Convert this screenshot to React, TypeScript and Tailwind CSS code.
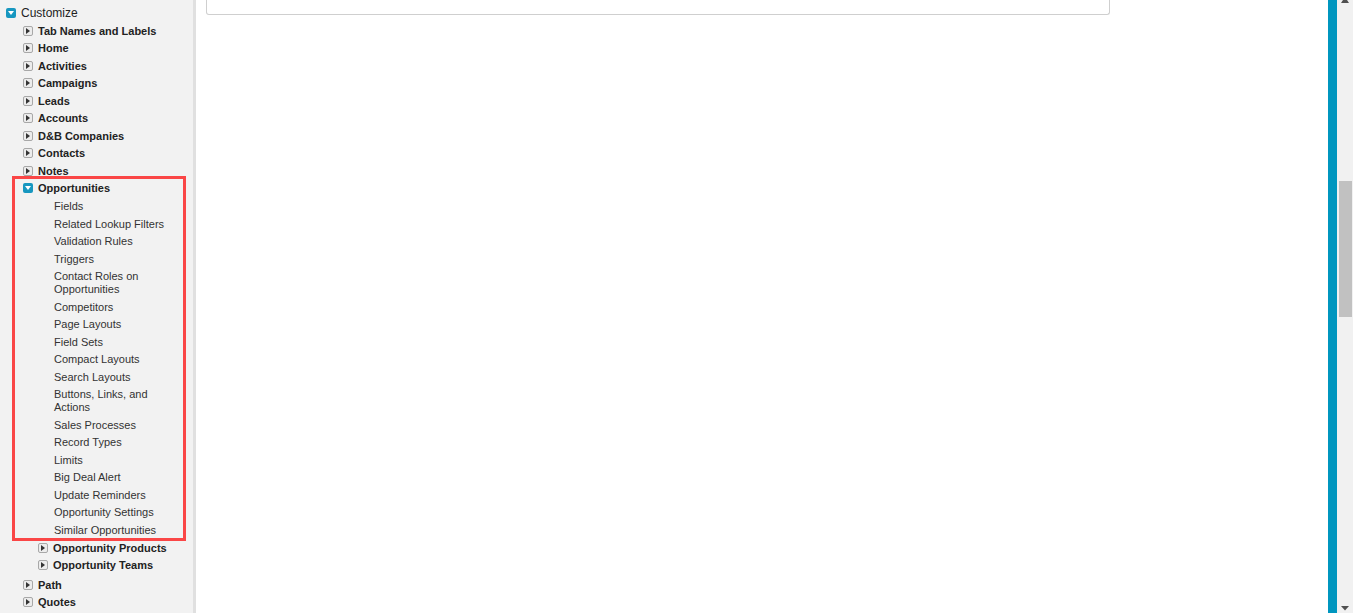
const topItems = [
  "Tab Names and Labels",
  "Home",
  "Activities",
  "Campaigns",
  "Leads",
  "Accounts",
  "D&B Companies",
  "Contacts",
  "Notes",
]

const oppLinks = [
  "Fields",
  "Related Lookup Filters",
  "Validation Rules",
  "Triggers",
  "Contact Roles on Opportunities",
  "Competitors",
  "Page Layouts",
  "Field Sets",
  "Compact Layouts",
  "Search Layouts",
  "Buttons, Links, and Actions",
  "Sales Processes",
  "Record Types",
  "Limits",
  "Big Deal Alert",
  "Update Reminders",
  "Opportunity Settings",
  "Similar Opportunities",
]

const Collapsed = () => (
  <span className="mr-[5px] flex h-[10px] w-[10px] shrink-0 items-center justify-center rounded-[2px] border border-[#a8a8a8] bg-[#ececec]">
    <svg width="4" height="6" viewBox="0 0 4 6">
      <path d="M0 0 L4 3 L0 6 Z" fill="#333" />
    </svg>
  </span>
)

const Expanded = () => (
  <span className="mr-[5px] flex h-[10px] w-[10px] shrink-0 items-center justify-center rounded-[2px] bg-[#1797c0]">
    <svg width="6" height="4" viewBox="0 0 6 4">
      <path d="M0 0 L6 0 L3 4 Z" fill="#fff" />
    </svg>
  </span>
)

const Row = ({ label, indent, open }: { label: string; indent: string; open?: boolean }) => (
  <li className={`flex h-[17.5px] items-center ${indent} font-bold text-[11px] text-[#222]`}>
    {open ? <Expanded /> : <Collapsed />}
    <span className="whitespace-nowrap">{label}</span>
  </li>
)

export default function App() {
  return (
    <div className="relative flex h-[613px] w-[1353px] overflow-hidden bg-white font-['Liberation_Sans',Arial,sans-serif]">
      <aside className="relative w-[196px] shrink-0 border-r-[3px] border-[#e0e0e0] bg-[#f2f2f2]">
        <ul className="pt-[4.5px]">
          <li className="flex h-[17.5px] items-center pl-[6px] text-[12px] text-[#222]">
            <Expanded />
            <span>Customize</span>
          </li>
          {topItems.map((t) => (
            <Row key={t} label={t} indent="pl-[23px]" />
          ))}
          <Row label="Opportunities" indent="pl-[23px]" open />
          <li className="pb-[2px]">
            <ul className="pt-[1px]">
              {oppLinks.map((t) => (
                <li key={t} className="pl-[54px] pr-[22px] py-[2.25px] text-[11px] leading-[13px] text-[#333]">
                  {t}
                </li>
              ))}
              <Row label="Opportunity Products" indent="pl-[38px]" />
              <Row label="Opportunity Teams" indent="pl-[38px]" />
            </ul>
          </li>
          <Row label="Path" indent="pl-[23px]" />
          <Row label="Quotes" indent="pl-[23px]" />
        </ul>
        <div className="pointer-events-none absolute left-[12px] top-[176px] h-[365px] w-[174px] border-[3px] border-[#fa4646]" />
      </aside>

      <main className="flex-1 pl-[10px]">
        <div className="h-[15px] w-[904px] rounded-b-[3px] border-x border-b border-[#cfcfcf]" />
      </main>

      <div className="w-[9px] shrink-0 bg-[#0096bf]" />

      <div className="relative w-[16px] shrink-0 bg-[#f1f1f1]">
        <div className="absolute left-1/2 top-0 -translate-x-1/2">
          <svg width="8" height="3" viewBox="0 0 8 3">
            <path d="M2 0 L6 0 L8 3 L0 3 Z" fill="#505050" />
          </svg>
        </div>
        <div className="absolute left-[2px] right-[1px] top-[181px] h-[136px] bg-[#c1c1c1]" />
        <div className="absolute bottom-[2px] left-1/2 -translate-x-1/2">
          <svg width="8" height="5" viewBox="0 0 8 5">
            <path d="M0 0 L8 0 L4 4.5 Z" fill="#505050" />
          </svg>
        </div>
      </div>
    </div>
  )
}
